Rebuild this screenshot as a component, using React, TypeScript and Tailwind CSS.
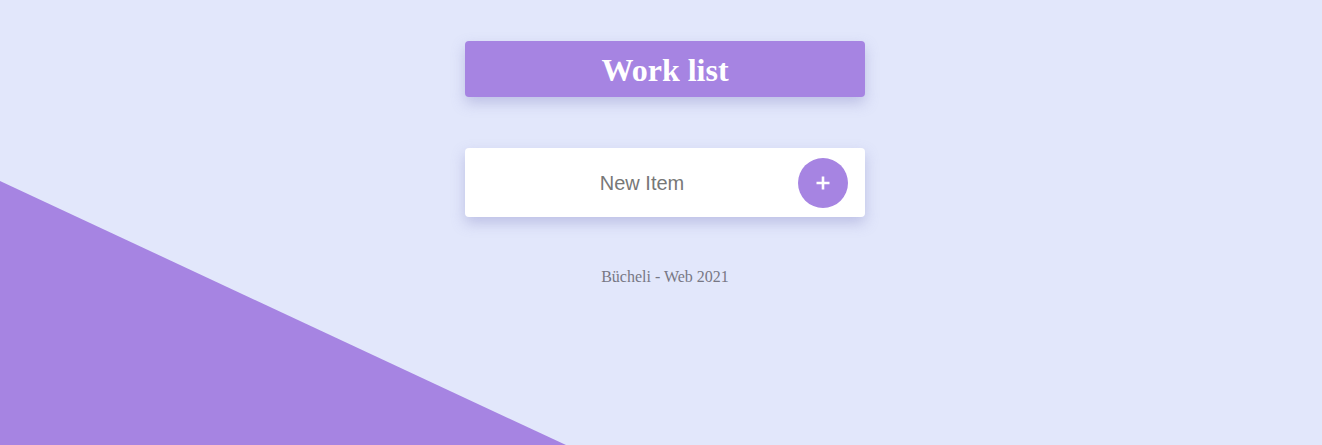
import React from "react";

export default function App() {
  return (
    <div className="relative min-h-screen w-full overflow-hidden bg-[#e2e7fb]">
      <svg
        className="absolute left-0 top-0 h-[445px] w-[1322px]"
        viewBox="0 0 1322 445"
        preserveAspectRatio="none"
      >
        <polygon points="0,181 566,445 0,445" fill="#a684e2" />
      </svg>
      <div className="relative flex flex-col items-center pl-[8px] pt-[41px]">
        <div className="flex h-[56px] w-[400px] items-center justify-center rounded-[4px] bg-[#a684e2] shadow-[0_6px_14px_rgba(120,120,190,0.35)]">
          <h1 className="pt-[1px] text-[32px] font-bold leading-none text-white [font-family:'Liberation_Serif',serif]">
            Work list
          </h1>
        </div>
        <div className="mt-[51px] flex h-[69px] w-[400px] items-center rounded-[4px] bg-white pr-[17px] shadow-[0_6px_14px_rgba(120,120,190,0.35)]">
          <div className="flex flex-1 items-center justify-center pl-[21px]">
            <span className="text-[20px] text-[#777777] [font-family:'Liberation_Sans',sans-serif]">
              New Item
            </span>
          </div>
          <button className="flex h-[50px] w-[50px] items-center justify-center rounded-full bg-[#a684e2]">
            <svg width="16" height="16" viewBox="0 0 16 16">
              <path d="M8 1.5v13M1.5 8h13" stroke="white" strokeWidth="2.6" />
            </svg>
          </button>
        </div>
        <p className="mt-[48px] text-[16px] text-[#777784] [font-family:'Liberation_Serif',serif]">
          Bücheli - Web 2021
        </p>
      </div>
    </div>
  );
}
